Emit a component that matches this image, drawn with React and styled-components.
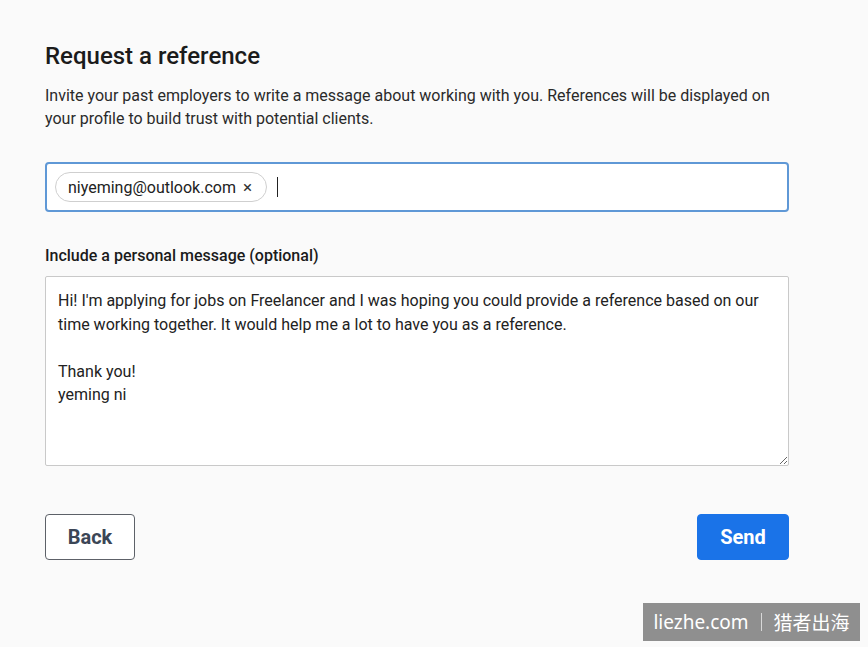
import React from 'react'
import styled, { createGlobalStyle } from 'styled-components'

const Global = createGlobalStyle`
  html, body {
    margin: 0;
    padding: 0;
    background: #fafafa;
    font-family: Roboto, "Noto Sans", "Liberation Sans", sans-serif;
  }
`

const Page = styled.div`
  position: relative;
  width: 868px;
  height: 647px;
  background: #fafafa;
  box-sizing: border-box;
  padding: 41px 79px 0 45px;
  color: #1f1f1f;
`

const Title = styled.h2`
  margin: 0;
  font-size: 24px;
  line-height: 30px;
  font-weight: 500;
  color: #1b1b1b;
`

const Intro = styled.p`
  margin: 13px 0 0;
  font-size: 16px;
  line-height: 23px;
  color: #2a2a2a;
`

const TagBox = styled.div`
  margin-top: 32px;
  height: 50px;
  box-sizing: border-box;
  border: 2px solid #5f98d6;
  border-radius: 4px;
  background: #fff;
  display: flex;
  align-items: center;
  padding: 0 8px;
  gap: 10px;
`

const Chip = styled.div`
  height: 30px;
  box-sizing: border-box;
  border: 1px solid #cfcfcf;
  border-radius: 15px;
  display: flex;
  align-items: center;
  gap: 7px;
  padding: 0 14px 0 12px;
  font-size: 16px;
  color: #222;
`

const Close = styled.span`
  font-size: 17px;
  line-height: 1;
  color: #333;
`

const Caret = styled.span`
  width: 1px;
  height: 20px;
  background: #222;
`

const Label = styled.div`
  margin-top: 34px;
  font-size: 16px;
  line-height: 20px;
  font-weight: 500;
  color: #1b1b1b;
`

const Message = styled.textarea`
  display: block;
  margin-top: 10px;
  width: 100%;
  height: 190px;
  box-sizing: border-box;
  border: 1px solid #c9c9c9;
  border-radius: 2px;
  background: #fff;
  padding: 12px 12px;
  font-family: Roboto, "Noto Sans", "Liberation Sans", sans-serif;
  font-size: 16px;
  line-height: 23.5px;
  color: #222;
  resize: vertical;
  outline: none;
`

const Actions = styled.div`
  margin-top: 48px;
  display: flex;
  justify-content: space-between;
`

const Button = styled.button`
  height: 46px;
  box-sizing: border-box;
  border-radius: 4px;
  font-family: Roboto, "Noto Sans", "Liberation Sans", sans-serif;
  font-size: 20px;
  font-weight: 700;
  cursor: pointer;
  width: ${({ $w }) => $w}px;
  border: 1px solid ${({ $primary }) => ($primary ? '#1a73e8' : '#5d6168')};
  background: ${({ $primary }) => ($primary ? '#1a73e8' : '#fff')};
  color: ${({ $primary }) => ($primary ? '#fff' : '#3b4656')};
`

const Watermark = styled.div`
  position: absolute;
  left: 643px;
  top: 603px;
  width: 217px;
  height: 38px;
  background: #8f8f8f;
  color: #fff;
  display: flex;
  align-items: center;
  justify-content: center;
  gap: 12px;
  font-size: 19px;
  font-family: "Noto Sans", "Noto Sans CJK SC", sans-serif;
`

const Sep = styled.span`
  width: 1px;
  height: 18px;
  background: #d8d8d8;
`

const text = `Hi! I'm applying for jobs on Freelancer and I was hoping you could provide a reference based on our time working together. It would help me a lot to have you as a reference.

Thank you!
yeming ni`

export default function App() {
  return (
    <Page>
      <Global />
      <Title>Request a reference</Title>
      <Intro>
        Invite your past employers to write a message about working with you. References will be displayed on
        your profile to build trust with potential clients.
      </Intro>
      <TagBox>
        <Chip>
          niyeming@outlook.com
          <Close>×</Close>
        </Chip>
        <Caret />
      </TagBox>
      <Label>Include a personal message (optional)</Label>
      <Message defaultValue={text} />
      <Actions>
        <Button $w={90}>Back</Button>
        <Button $w={92} $primary>Send</Button>
      </Actions>
      <Watermark>
        <span>liezhe.com</span>
        <Sep />
        <span>猎者出海</span>
      </Watermark>
    </Page>
  )
}
